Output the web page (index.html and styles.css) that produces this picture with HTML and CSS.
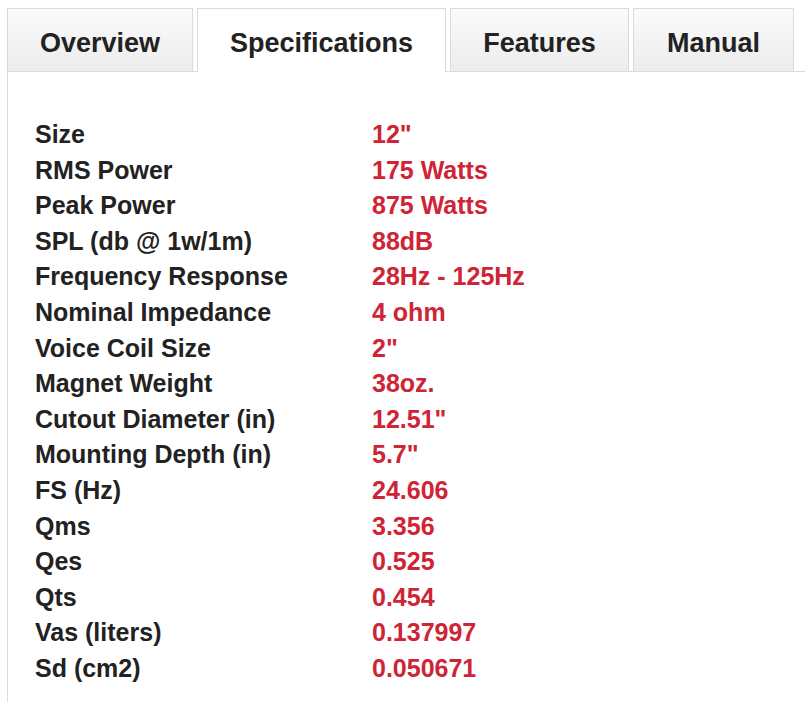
FILE: index.html
```html
<!DOCTYPE html>
<html>
<head>
<meta charset="utf-8">
<link rel="stylesheet" href="styles.css">
</head>
<body>
<div class="wrap">
  <div class="tabs">
    <div class="tab t1">Overview</div>
    <div class="tab t2 active">Specifications</div>
    <div class="tab t3">Features</div>
    <div class="tab t4">Manual</div>
  </div>
  <div class="panel">
    <table class="specs">
      <tr><th>Size</th><td>12"</td></tr>
      <tr><th>RMS Power</th><td>175 Watts</td></tr>
      <tr><th>Peak Power</th><td>875 Watts</td></tr>
      <tr><th>SPL (db @ 1w/1m)</th><td>88dB</td></tr>
      <tr><th>Frequency Response</th><td>28Hz - 125Hz</td></tr>
      <tr><th>Nominal Impedance</th><td>4 ohm</td></tr>
      <tr><th>Voice Coil Size</th><td>2"</td></tr>
      <tr><th>Magnet Weight</th><td>38oz.</td></tr>
      <tr><th>Cutout Diameter (in)</th><td>12.51"</td></tr>
      <tr><th>Mounting Depth (in)</th><td>5.7"</td></tr>
      <tr><th>FS (Hz)</th><td>24.606</td></tr>
      <tr><th>Qms</th><td>3.356</td></tr>
      <tr><th>Qes</th><td>0.525</td></tr>
      <tr><th>Qts</th><td>0.454</td></tr>
      <tr><th>Vas (liters)</th><td>0.137997</td></tr>
      <tr><th>Sd (cm2)</th><td>0.050671</td></tr>
    </table>
  </div>
</div>
</body>
</html>
```
FILE: styles.css
```css
html, body {
  margin: 0;
  padding: 0;
  background: #fff;
}
body {
  font-family: "Liberation Sans", Arial, sans-serif;
  overflow: hidden;
}
.wrap {
  padding: 8px 0 0 7px;
}
.tabs {
  display: flex;
  gap: 4px;
  border-bottom: 1px solid #dcdcdc;
  height: 63px;
  margin-right: -20px;
}
.tab {
  box-sizing: border-box;
  height: 63px;
  border: 1px solid #dadada;
  border-bottom: none;
  background: linear-gradient(#fbfbfb, #ececec);
  display: flex;
  align-items: center;
  justify-content: center;
  padding-top: 6px;
  font-weight: bold;
  font-size: 27px;
  color: #222;
}
.tab.active {
  background: #fff;
  height: 64px;
  margin-bottom: -1px;
  padding-bottom: 1px;
}
.t1 { width: 186px; }
.t2 { width: 249px; }
.t3 { width: 179px; }
.t4 { width: 161px; }
.panel {
  border-left: 1px solid #dcdcdc;
  padding: 45px 0 40px 27px;
}
.specs {
  border-collapse: collapse;
  font-size: 25px;
  font-weight: bold;
}
.specs th, .specs td {
  padding: 0;
  height: 35.6px;
  line-height: 35.6px;
  text-align: left;
  vertical-align: middle;
  white-space: nowrap;
}
.specs th {
  width: 337px;
  color: #222;
}
.specs td {
  color: #cf2435;
}
```
